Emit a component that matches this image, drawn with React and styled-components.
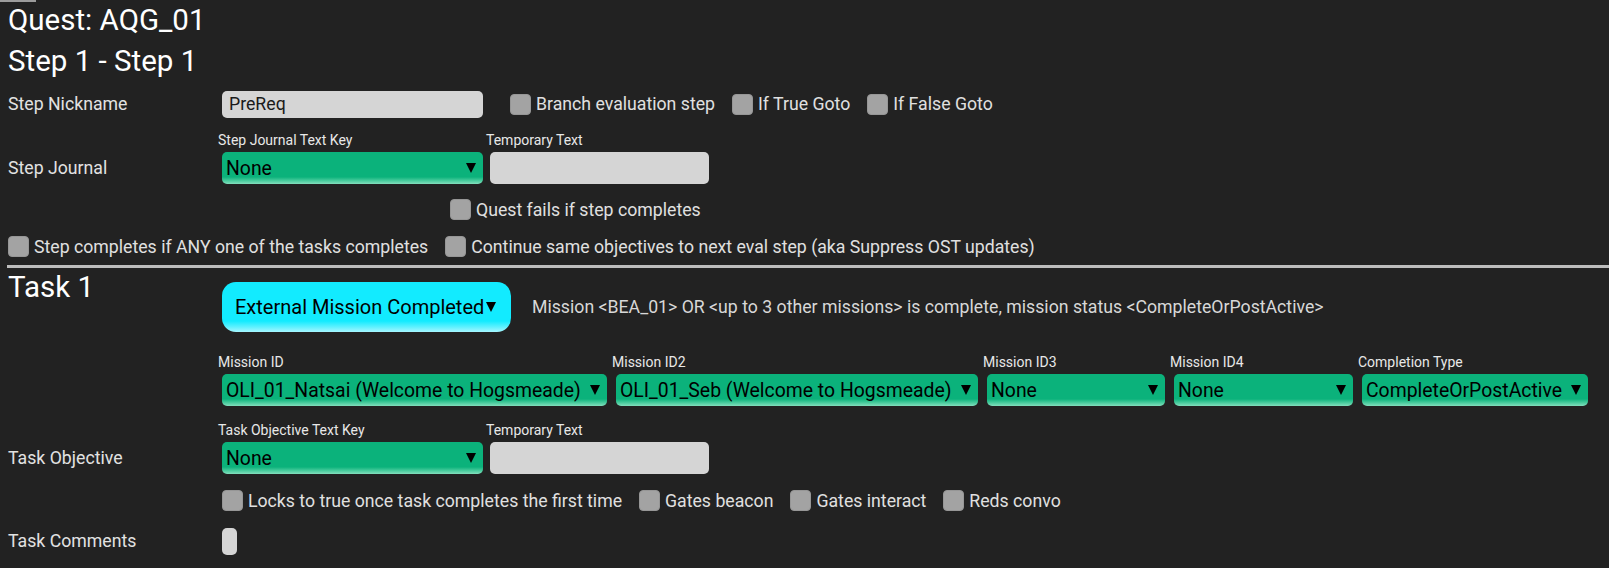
import React from "react";
import styled, { createGlobalStyle } from "styled-components";

const GlobalStyle = createGlobalStyle`
  html, body {
    margin: 0;
    padding: 0;
    background: #222222;
  }
  body {
    font-family: Roboto, "Liberation Sans", sans-serif;
    color: #e4e4e4;
  }
`;

const Page = styled.div`
  min-height: 568px;
  padding-left: 8px;
  box-sizing: border-box;
  overflow: hidden;
  background: #222222;
`;

const TopTab = styled.div`
  width: 36px;
  height: 2px;
  margin: 0 0 -1px -8px;
  background: #9c9c9c;
`;

const Title = styled.div`
  margin-top: ${(p) => p.$mt || 0}px;
  font-size: 29.5px;
  line-height: 39px;
  color: #ffffff;
  white-space: nowrap;
`;

const Row = styled.div`
  display: flex;
  align-items: ${(p) => p.$align || "center"};
  margin-top: ${(p) => p.$mt || 0}px;
  padding-left: ${(p) => p.$indent || 0}px;
`;

const RowLabel = styled.div`
  flex: none;
  width: 214px;
  font-size: 17.7px;
  line-height: 32px;
  color: #e2e2e2;
`;

const TextBox = styled.div`
  flex: none;
  box-sizing: border-box;
  width: ${(p) => p.$w}px;
  height: ${(p) => p.$h}px;
  margin-left: ${(p) => p.$ml || 0}px;
  padding-left: 7px;
  border-radius: 5px;
  background: #d5d5d5;
  color: #1a1a1a;
  font-size: 17.7px;
  line-height: ${(p) => p.$h}px;
`;

const CheckGroup = styled.div`
  display: flex;
  align-items: center;
  gap: 17px;
  margin-left: ${(p) => p.$ml || 0}px;
`;

const CheckItem = styled.label`
  display: flex;
  align-items: center;
  gap: 5px;
  font-size: 17.7px;
  color: #e0e0e0;
  white-space: nowrap;
`;

const Box = styled.span`
  flex: none;
  box-sizing: border-box;
  width: 21px;
  height: 21px;
  border-radius: 4px;
  border: 1px solid #969696;
  background: #a3a3a3;
`;

const FieldGroup = styled.div`
  display: flex;
  align-items: flex-end;
  gap: ${(p) => p.$gap ?? 5}px;
  margin-left: -4px;
`;

const FieldCol = styled.div`
  display: flex;
  flex-direction: column;
`;

const FieldLabel = styled.div`
  font-size: 14px;
  line-height: 16px;
  margin-bottom: 4px;
  color: #e8e8e8;
  white-space: nowrap;
`;

const Dropdown = styled.div`
  display: flex;
  align-items: center;
  box-sizing: border-box;
  width: ${(p) => p.$w}px;
  height: 32px;
  margin-left: 4px;
  padding: 0 7px 0 4px;
  border-radius: 5px;
  background: linear-gradient(
    to bottom,
    #0bb27b 0%,
    #0bb27b 78%,
    #40c898 88%,
    #82dfbd 100%
  );
  color: #000000;
  font-size: 19.4px;
`;

const DropText = styled.span`
  flex: 1;
  min-width: 0;
  white-space: nowrap;
`;

const Arrow = styled.span`
  flex: none;
  width: 0;
  height: 0;
  margin-left: 2px;
  border-left: 5px solid transparent;
  border-right: 5px solid transparent;
  border-top: 10px solid #000000;
`;

const Divider = styled.div`
  height: 3px;
  margin: 8px 0 0 -1px;
  background: #bdbdbd;
`;

const TaskHead = styled.div`
  display: flex;
  align-items: center;
  gap: 21px;
  margin-top: 14px;
`;

const TypeButton = styled.div`
  display: flex;
  align-items: center;
  box-sizing: border-box;
  width: 289px;
  height: 50px;
  padding: 0 15px 0 13px;
  border-radius: 14px;
  background: linear-gradient(
    to bottom,
    #12ebff 0%,
    #12ebff 78%,
    #5ff1ff 90%,
    #a6f6ff 100%
  );
  color: #000000;
  font-size: 20px;
  white-space: nowrap;
`;

const Summary = styled.div`
  font-size: 17.7px;
  color: #d8d8d8;
  white-space: nowrap;
`;

const Select = ({ w, value }) => (
  <Dropdown $w={w}>
    <DropText>{value}</DropText>
    <Arrow />
  </Dropdown>
);

const Check = ({ children }) => (
  <CheckItem>
    <Box />
    {children}
  </CheckItem>
);

const missionFields = [
  { label: "Mission ID", w: 385, value: "OLI_01_Natsai (Welcome to Hogsmeade)" },
  { label: "Mission ID2", w: 362, value: "OLI_01_Seb (Welcome to Hogsmeade)" },
  { label: "Mission ID3", w: 178, value: "None" },
  { label: "Mission ID4", w: 179, value: "None" },
  { label: "Completion Type", w: 226, value: "CompleteOrPostActive" },
];

export default function App() {
  return (
    <Page>
      <GlobalStyle />
      <TopTab />
      <Title>Quest: AQG_01</Title>
      <Title $mt={2}>Step 1 - Step 1</Title>

      <Row $mt={7}>
        <RowLabel>Step Nickname</RowLabel>
        <TextBox $w={261} $h={27}>PreReq</TextBox>
        <CheckGroup $ml={27}>
          <Check>Branch evaluation step</Check>
          <Check>If True Goto</Check>
          <Check>If False Goto</Check>
        </CheckGroup>
      </Row>

      <Row $mt={12} $align="flex-end">
        <RowLabel>Step Journal</RowLabel>
        <FieldGroup $gap={3}>
          <FieldCol>
            <FieldLabel>Step Journal Text Key</FieldLabel>
            <Select w={261} value="None" />
          </FieldCol>
          <FieldCol>
            <FieldLabel>Temporary Text</FieldLabel>
            <TextBox $w={219} $h={32} $ml={4} />
          </FieldCol>
        </FieldGroup>
      </Row>

      <Row $mt={15} $indent={442}>
        <Check>Quest fails if step completes</Check>
      </Row>

      <Row $mt={16}>
        <CheckGroup>
          <Check>Step completes if ANY one of the tasks completes</Check>
          <Check>Continue same objectives to next eval step (aka Suppress OST updates)</Check>
        </CheckGroup>
      </Row>

      <Divider />

      <Row $align="flex-start">
        <RowLabel>
          <Title>Task 1</Title>
        </RowLabel>
        <TaskHead>
          <TypeButton>
            External Mission Completed
            <Arrow />
          </TypeButton>
          <Summary>
            Mission &lt;BEA_01&gt; OR &lt;up to 3 other missions&gt; is complete, mission status
            &lt;CompleteOrPostActive&gt;
          </Summary>
        </TaskHead>
      </Row>

      <Row $mt={22} $align="flex-end">
        <RowLabel />
        <FieldGroup>
          {missionFields.map((f) => (
            <FieldCol key={f.label}>
              <FieldLabel>{f.label}</FieldLabel>
              <Select w={f.w} value={f.value} />
            </FieldCol>
          ))}
        </FieldGroup>
      </Row>

      <Row $mt={16} $align="flex-end">
        <RowLabel>Task Objective</RowLabel>
        <FieldGroup $gap={3}>
          <FieldCol>
            <FieldLabel>Task Objective Text Key</FieldLabel>
            <Select w={261} value="None" />
          </FieldCol>
          <FieldCol>
            <FieldLabel>Temporary Text</FieldLabel>
            <TextBox $w={219} $h={32} $ml={4} />
          </FieldCol>
        </FieldGroup>
      </Row>

      <Row $mt={16}>
        <RowLabel />
        <CheckGroup>
          <Check>Locks to true once task completes the first time</Check>
          <Check>Gates beacon</Check>
          <Check>Gates interact</Check>
          <Check>Reds convo</Check>
        </CheckGroup>
      </Row>

      <Row $mt={14}>
        <RowLabel>Task Comments</RowLabel>
        <TextBox $w={15} $h={27} />
      </Row>
    </Page>
  );
}
